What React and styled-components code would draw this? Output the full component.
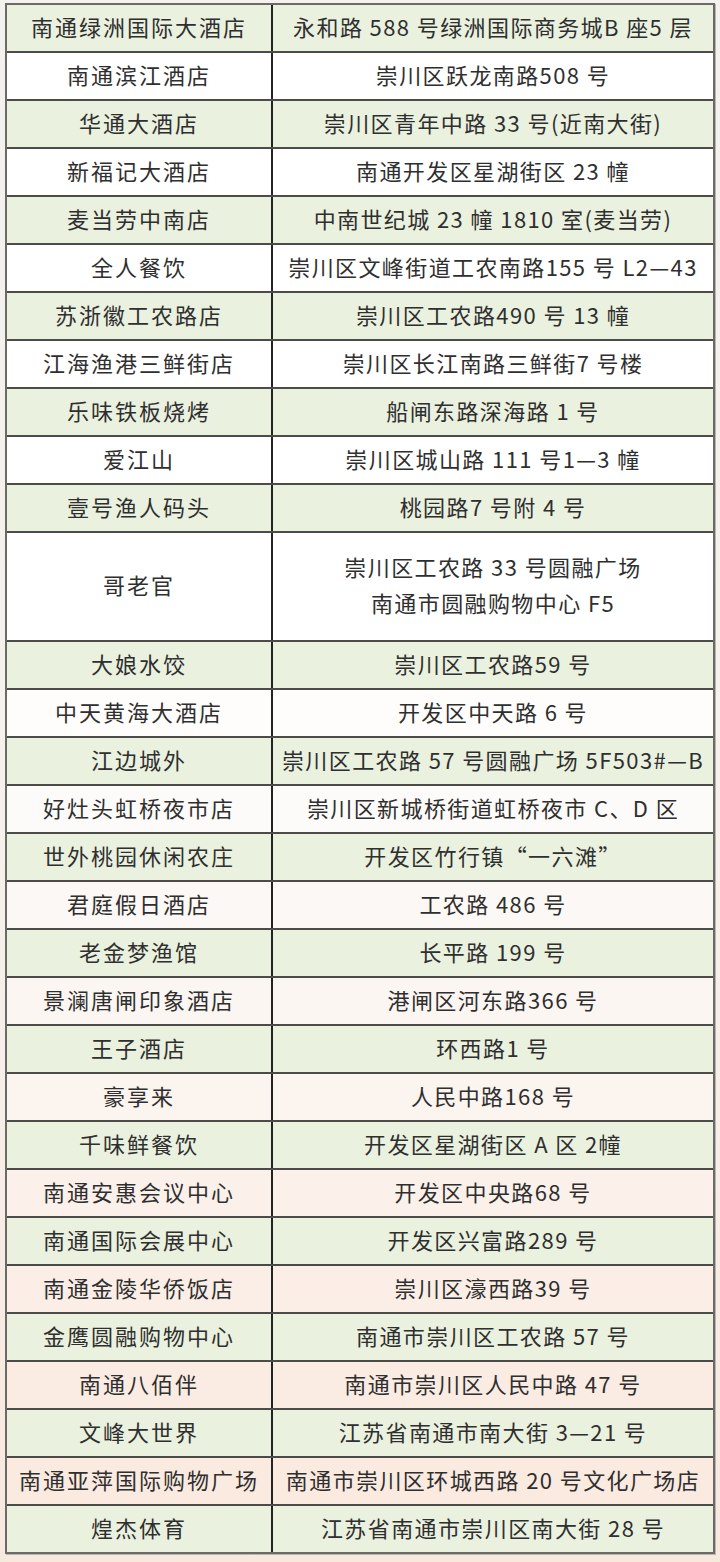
import React from 'react';
import styled, { createGlobalStyle } from 'styled-components';

const GlobalStyle = createGlobalStyle`
  html, body {
    margin: 0;
    padding: 0;
  }
  body {
    width: 720px;
    min-height: 1562px;
    background: linear-gradient(180deg, #f3f2ef 0%, #f6f1ec 55%, #f8e9df 100%);
    font-family: "Noto Sans CJK SC", "Noto Sans", sans-serif;
  }
`;

const rows = [
  ['南通绿洲国际大酒店', '永和路 588 号绿洲国际商务城B 座5 层'],
  ['南通滨江酒店', '崇川区跃龙南路508 号'],
  ['华通大酒店', '崇川区青年中路 33 号(近南大街)'],
  ['新福记大酒店', '南通开发区星湖街区 23 幢'],
  ['麦当劳中南店', '中南世纪城 23 幢 1810 室(麦当劳)'],
  ['全人餐饮', '崇川区文峰街道工农南路155 号 L2—43'],
  ['苏浙徽工农路店', '崇川区工农路490 号 13 幢'],
  ['江海渔港三鲜街店', '崇川区长江南路三鲜街7 号楼'],
  ['乐味铁板烧烤', '船闸东路深海路 1 号'],
  ['爱江山', '崇川区城山路 111 号1—3 幢'],
  ['壹号渔人码头', '桃园路7 号附 4 号'],
  ['哥老官', ['崇川区工农路 33 号圆融广场', '南通市圆融购物中心 F5']],
  ['大娘水饺', '崇川区工农路59 号'],
  ['中天黄海大酒店', '开发区中天路 6 号'],
  ['江边城外', '崇川区工农路 57 号圆融广场 5F503#—B'],
  ['好灶头虹桥夜市店', '崇川区新城桥街道虹桥夜市 C、D 区'],
  ['世外桃园休闲农庄', '开发区竹行镇“一六滩”'],
  ['君庭假日酒店', '工农路 486 号'],
  ['老金梦渔馆', '长平路 199 号'],
  ['景澜唐闸印象酒店', '港闸区河东路366 号'],
  ['王子酒店', '环西路1 号'],
  ['豪享来', '人民中路168 号'],
  ['千味鲜餐饮', '开发区星湖街区 A 区 2幢'],
  ['南通安惠会议中心', '开发区中央路68 号'],
  ['南通国际会展中心', '开发区兴富路289 号'],
  ['南通金陵华侨饭店', '崇川区濠西路39 号'],
  ['金鹰圆融购物中心', '南通市崇川区工农路 57 号'],
  ['南通八佰伴', '南通市崇川区人民中路 47 号'],
  ['文峰大世界', '江苏省南通市南大街 3—21 号'],
  ['南通亚萍国际购物广场', '南通市崇川区环城西路 20 号文化广场店'],
  ['煌杰体育', '江苏省南通市崇川区南大街 28 号'],
];

// light rows drift from white to peach toward the bottom
const lightShades = [
  '#ffffff', '#ffffff', '#ffffff', '#ffffff', '#ffffff', '#ffffff',
  '#fefdfc', '#fdfbf9', '#fcf8f5', '#fbf6f2', '#fbf4ef', '#fbf1ea',
  '#faeee6', '#faece3', '#faeae0', '#f9e9de',
];

const Table = styled.div`
  margin: 3px 0 0 5px;
  width: 710px;
  box-sizing: border-box;
  border: 2px solid #6c6a67;
  box-shadow: 1px 1px 0 #b9b5b0;
  display: flex;
  flex-direction: column;
`;

const Row = styled.div`
  display: grid;
  grid-template-columns: 266px 1fr;
  min-height: ${({ $tall }) => ($tall ? '107px' : '46px')};
  background: ${({ $bg }) => $bg};
  border-top: ${({ $first }) => ($first ? 'none' : '2px solid #4d4b48')};
`;

const Cell = styled.div`
  display: flex;
  flex-direction: column;
  align-items: center;
  justify-content: center;
  text-align: center;
  color: #2f2f2f;
  font-size: 22px;
  letter-spacing: 2px;
  line-height: 36px;
  white-space: nowrap;
  padding-bottom: 5px;
`;

const NameCell = styled(Cell)`
  border-right: 2px solid #242322;
`;

const AddrCell = styled(Cell)`
  letter-spacing: 1.4px;
`;

export default function App() {
  let lightIndex = 0;
  return (
    <>
      <GlobalStyle />
      <Table>
        {rows.map(([name, addr], i) => {
          const green = i % 2 === 0;
          const bg = green ? '#eaf1df' : lightShades[lightIndex++];
          const tall = Array.isArray(addr);
          return (
            <Row key={name} $bg={bg} $first={i === 0} $tall={tall}>
              <NameCell>{name}</NameCell>
              <AddrCell>
                {tall ? addr.map((line) => <span key={line}>{line}</span>) : addr}
              </AddrCell>
            </Row>
          );
        })}
      </Table>
    </>
  );
}
